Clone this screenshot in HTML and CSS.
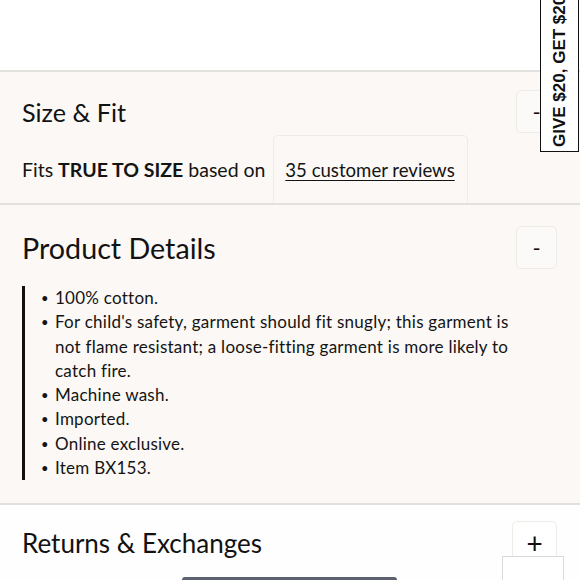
FILE: index.html
```html
<!DOCTYPE html>
<html lang="en">
<head>
<meta charset="utf-8">
<title>Product accordion</title>
<link rel="stylesheet" href="styles.css">
</head>
<body>
<div class="top"></div>

<section class="panel panel-size">
  <div class="panel-head">
    <h2 class="title title-size">Size &amp; Fit</h2>
    <button class="toggle">-</button>
  </div>
  <div class="fit-row">
    <p class="fit-text">Fits <strong>TRUE TO SIZE</strong> based on</p>
    <div class="review-box"><a class="review-link" href="#">35 customer reviews</a></div>
  </div>
</section>

<section class="panel panel-details">
  <div class="panel-head">
    <h2 class="title title-details">Product Details</h2>
    <button class="toggle">-</button>
  </div>
  <div class="details-body">
    <ul class="details-list">
      <li>100% cotton.</li>
      <li>For child's safety, garment should fit snugly; this garment is not flame resistant; a loose-fitting garment is more likely to catch fire.</li>
      <li>Machine wash.</li>
      <li>Imported.</li>
      <li>Online exclusive.</li>
      <li>Item BX153.</li>
    </ul>
  </div>
</section>

<section class="panel panel-returns">
  <div class="panel-head">
    <h2 class="title title-returns">Returns &amp; Exchanges</h2>
    <button class="toggle toggle-plus">+</button>
  </div>
</section>

<div class="promo-tab">GIVE $20, GET $20</div>
<div class="chat-box"></div>
<div class="bottom-bar"></div>
</body>
</html>
```
FILE: styles.css
```css
* { box-sizing: border-box; }

html, body {
  margin: 0;
  padding: 0;
  background: #ffffff;
  overflow: hidden;
}

body {
  width: 580px;
  height: 580px;
  position: relative;
  font-family: Lato, "Open Sans", sans-serif;
  color: #141414;
}

.top {
  height: 70px;
  background: #ffffff;
}

.panel {
  border-top: 2px solid #e3e1de;
  background: #fbf8f5;
  padding: 0 23px 0 22px;
}

.panel-head {
  display: flex;
  align-items: center;
  justify-content: space-between;
  height: 43px;
}

.title {
  margin: 0;
  font-weight: 400;
  color: #121212;
}

.title-size { font-size: 25.2px; }
.title-details { font-size: 28.7px; }
.title-returns { font-size: 26px; }

.toggle {
  width: 41px;
  height: 43px;
  border: 1px solid #efece8;
  border-radius: 5px;
  background: #fcfaf8;
  font-family: Lato, sans-serif;
  font-size: 22px;
  line-height: 1;
  color: #111;
  padding: 0;
}

.toggle-plus {
  width: 45px;
  font-size: 28px;
  background: #ffffff;
}

/* Size & Fit */
.panel-size {
  padding-top: 18px;
}

.fit-row {
  display: flex;
  align-items: center;
  margin-top: 2px;
}

.fit-text {
  margin: 0;
  font-size: 19.5px;
}

.fit-text strong {
  font-weight: 700;
}

.review-box {
  margin-left: 7px;
  height: 68px;
  width: 195px;
  display: flex;
  align-items: center;
  justify-content: center;
  border: 1px solid #efece8;
  border-bottom: none;
  border-radius: 5px 5px 0 0;
}

.review-link {
  font-size: 18.6px;
  color: #141414;
  text-decoration: underline;
  text-underline-offset: 3px;
}

/* Product details */
.panel-details {
  padding-top: 21px;
  padding-bottom: 23px;
}

.details-body {
  margin-top: 17px;
  border-left: 3px solid #111;
  padding-left: 14px;
}

.details-list {
  list-style: none;
  margin: 0;
  padding: 0;
  font-size: 17px;
  letter-spacing: 0.25px;
  line-height: 24.3px;
  padding-right: 40px;
}

.details-list li {
  display: flex;
}

.details-list li::before {
  content: "•";
  flex: none;
  width: 14px;
  font-size: 13px;
  padding-left: 2px;
}

/* Returns */
.panel-returns {
  background: #fefefe;
  padding-top: 16px;
  height: 80px;
}

/* Overlays */
.promo-tab {
  position: absolute;
  right: 1px;
  top: -40px;
  height: 192px;
  width: 39px;
  background: #ffffff;
  border: 1.5px solid #111;
  writing-mode: vertical-rl;
  transform: rotate(180deg);
  font-family: "Liberation Sans", Arial, sans-serif;
  font-weight: 700;
  font-size: 17px;
  letter-spacing: 0;
  color: #111;
  display: flex;
  align-items: center;
  padding-top: 4px;
}

.chat-box {
  position: absolute;
  left: 502px;
  top: 556px;
  width: 62px;
  height: 30px;
  background: #ffffff;
  border: 1px solid #d9d9d9;
}

.bottom-bar {
  position: absolute;
  left: 182px;
  top: 577px;
  width: 215px;
  height: 6px;
  border-radius: 3px 3px 0 0;
  background: #5c616f;
}
```
